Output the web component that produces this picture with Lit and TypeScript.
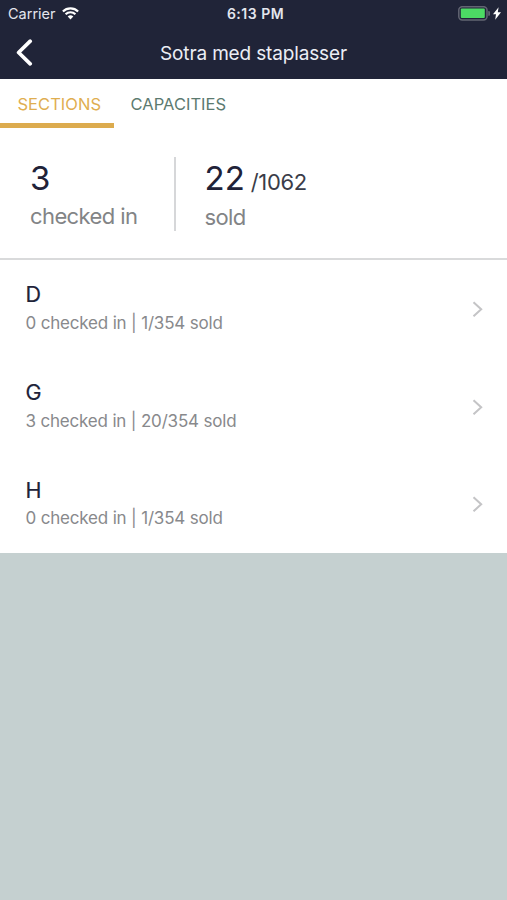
import { LitElement, html, css } from "lit";
import { customElement, property } from "lit/decorators.js";

interface Section {
  name: string;
  checkedIn: number;
  sold: number;
  capacity: number;
}

const sections: Section[] = [
  { name: "D", checkedIn: 0, sold: 1, capacity: 354 },
  { name: "G", checkedIn: 3, sold: 20, capacity: 354 },
  { name: "H", checkedIn: 0, sold: 1, capacity: 354 },
];

@customElement("status-bar")
class StatusBar extends LitElement {
  static styles = css`
    :host {
      display: grid;
      grid-template-columns: 1fr auto 1fr;
      align-items: center;
      height: 27px;
      padding: 0 6px 0 8px;
      color: #e4e6ee;
      font-size: 14.5px;
      line-height: 27px;
    }
    .carrier {
      display: flex;
      align-items: center;
      gap: 6px;
    }
    .time {
      font-size: 14px;
      font-weight: 600;
      letter-spacing: 0.5px;
      margin-left: 2px;
    }
    .power {
      display: flex;
      align-items: center;
      justify-content: flex-end;
      gap: 3px;
    }
    svg {
      display: block;
    }
  `;
  render() {
    return html`
      <div class="carrier">
        <span>Carrier</span>
        <svg width="17" height="13" viewBox="0 0 17 13">
          <g fill="none" stroke="#fff" stroke-width="2.2">
            <path d="M0.9 4.5a10.7 10.7 0 0 1 15.2 0" />
            <path d="M3.6 7.3a6.9 6.9 0 0 1 9.8 0" />
          </g>
          <path d="M5.7 9.5a4 4 0 0 1 5.6 0L8.5 12.4z" fill="#fff" />
        </svg>
      </div>
      <span class="time">6:13 PM</span>
      <div class="power">
        <svg width="32" height="15" viewBox="0 0 32 15">
          <rect x="0.8" y="0.7" width="28.2" height="13.2" rx="3.4" fill="none" stroke="#626572" stroke-width="1.5" />
          <rect x="2.8" y="2.6" width="24" height="9.4" rx="1" fill="#4cdb64" />
          <path d="M30.2 5a2.4 2.4 0 0 1 0 4.8z" fill="#626572" />
        </svg>
        <svg width="8" height="13" viewBox="0 0 8 13">
          <path d="M5.6 0.2 0 7.3h3L2.2 12.8 8 5.3H4.8z" fill="#fff" />
        </svg>
      </div>
    `;
  }
}

@customElement("section-row")
class SectionRow extends LitElement {
  @property({ attribute: false }) section!: Section;
  static styles = css`
    :host {
      display: flex;
      align-items: center;
      justify-content: space-between;
      box-sizing: border-box;
      height: 97.7px;
      padding: 0 24px 0 25.5px;
    }
    .text {
      padding-bottom: 0.5px;
    }
    .name {
      font-size: 21.5px;
      line-height: 28px;
      color: #202238;
      -webkit-text-stroke: 0.2px #202238;
    }
    .detail {
      margin-top: 1.5px;
      font-size: 17px;
      letter-spacing: -0.18px;
      line-height: 27px;
      color: #88898c;
    }
    svg {
      display: block;
    }
  `;
  render() {
    const s = this.section;
    return html`
      <div class="text">
        <div class="name">${s.name}</div>
        <div class="detail">${s.checkedIn} checked in | ${s.sold}/${s.capacity} sold</div>
      </div>
      <svg width="11" height="16" viewBox="0 0 11 16">
        <path d="M1.5 1.3 9.2 8.3 1.5 15.3" fill="none" stroke="#c4c4c6" stroke-width="2" />
      </svg>
    `;
  }
}

@customElement("app-root")
class AppRoot extends LitElement {
  static styles = css`
    :host {
      display: flex;
      flex-direction: column;
      height: 900px;
      overflow: hidden;
      background: #c5d0d0;
      font-family: Inter, "Liberation Sans", sans-serif;
    }
    .header {
      flex: none;
      height: 79px;
      background: #202438;
    }
    .nav {
      display: grid;
      grid-template-columns: 1fr auto 1fr;
      align-items: center;
      height: 52px;
      padding: 0 16px;
    }
    .back {
      display: block;
      margin-bottom: 1px;
    }
    .title {
      color: #eceef5;
      font-size: 19px;
      letter-spacing: -0.15px;
      line-height: 50px;
      padding-top: 2px;
    }
    .tabs {
      flex: none;
      display: flex;
      height: 49px;
      background: #fff;
    }
    .tab {
      box-sizing: border-box;
      height: 49px;
      padding: 0 12.5px 0 16.5px;
      font-size: 16.5px;
      letter-spacing: 0.03px;
      line-height: 50px;
      color: #5c7a70;
    }
    .tab.active {
      width: 114px;
      padding-left: 17.5px;
      color: #dfae50;
      border-bottom: 5px solid #dcab4e;
    }
    .summary {
      flex: none;
      display: flex;
      box-sizing: border-box;
      height: 132px;
      padding: 29px 30px 0;
      background: #fff;
      border-bottom: 2px solid #d9dadb;
    }
    .stat {
      height: 74px;
    }
    .stat.first {
      box-sizing: border-box;
      width: 146px;
      border-right: 2px solid #d6d7d9;
      margin-right: 28.5px;
    }
    .figure {
      height: 42px;
      font-size: 33px;
      line-height: 42px;
      color: #202238;
      white-space: pre;
    }
    .total {
      font-size: 22px;
      letter-spacing: -0.3px;
      color: #3a3c48;
    }
    .label {
      font-size: 22px;
      letter-spacing: -0.6px;
      line-height: 34px;
      color: #828486;
    }
    .stat:not(.first) .label {
      padding-top: 1px;
    }
    .list {
      flex: none;
      height: 293px;
      background: #fff;
    }
  `;
  render() {
    return html`
      <header class="header">
        <status-bar></status-bar>
        <div class="nav">
          <svg class="back" width="17" height="27" viewBox="0 0 17 27">
            <path d="M14.2 2.2 2.6 13.5 14.2 24.8" fill="none" stroke="#fff" stroke-width="3.7" stroke-linejoin="round" stroke-linecap="round" />
          </svg>
          <span class="title">Sotra med staplasser</span>
        </div>
      </header>
      <nav class="tabs">
        <div class="tab active">SECTIONS</div>
        <div class="tab">CAPACITIES</div>
      </nav>
      <div class="summary">
        <div class="stat first">
          <div class="figure">3</div>
          <div class="label">checked in</div>
        </div>
        <div class="stat">
          <div class="figure">22<span class="total"> /1062</span></div>
          <div class="label">sold</div>
        </div>
      </div>
      <div class="list">
        ${sections.map((s) => html`<section-row .section=${s}></section-row>`)}
      </div>
    `;
  }
}
